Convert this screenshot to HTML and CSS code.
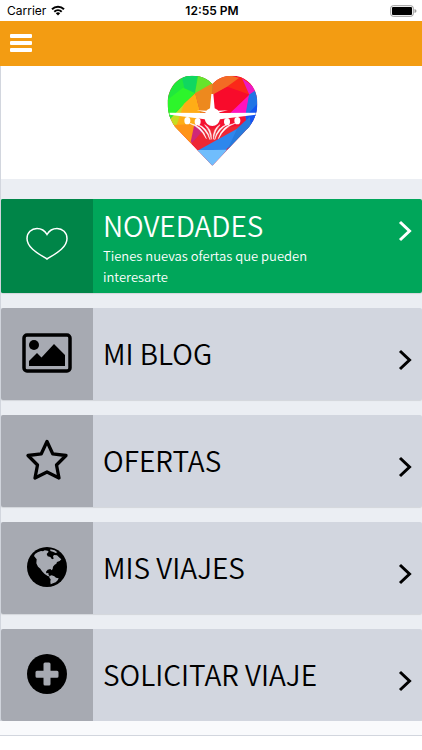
FILE: index.html
```html
<!DOCTYPE html>
<html lang="es">
<head>
<meta charset="utf-8">
<meta name="viewport" content="width=device-width, initial-scale=1">
<title>Inicio</title>
<link rel="stylesheet" href="styles.css">
</head>
<body>
<div class="status">
  <span class="carrier">Carrier
    <svg width="14" height="11" viewBox="0 0 14 11" fill="none" stroke="#000" stroke-width="2"><path d="M1 4.3a8.6 8.6 0 0 1 12 0M3.3 6.8a5.4 5.4 0 0 1 7.4 0"/><path d="M7 10.5 4.8 8.3a3.2 3.2 0 0 1 4.4 0z" fill="#000" stroke="none"/></svg>
  </span>
  <time class="clock">12:55 PM</time>
  <svg class="battery" width="27" height="12" viewBox="0 0 27 12"><rect x=".7" y=".7" width="22.6" height="10.6" rx="2.5" fill="#fff" stroke="#999" stroke-width="1"/><rect x="2" y="2" width="20" height="8" rx="1"/><path d="M24.5 4v4q2-.5 2-2t-2-2z" fill="#999"/></svg>
</div>
<header class="topbar">
  <button class="menu" type="button" aria-label="Menú"><svg width="22" height="20" viewBox="0 0 22 20" fill="#fff"><rect y="0" width="22" height="4" rx="1"/><rect y="7" width="22" height="4" rx="1"/><rect y="14" width="22" height="4" rx="1"/></svg></button>
</header>
<div class="page">
  <div class="brand">
    <svg width="106" height="100" viewBox="0 0 318 300" role="img" aria-label="Logo">
      <clipPath id="heart"><path d="M160 287 48 170C34 152 26 126 26 100C26 54 56 17 99 17C126 17 148 27 160 43C173 27 194 17 220 17C264 17 295 54 295 98C295 127 286 151 270 171Z"/></clipPath>
      <g clip-path="url(#heart)">
        <path fill="#f41230" d="M0 0h318v300H0z"/>
        <path fill="#20e83c" d="M20 10h140v55l-52 5-34 35-54 65z"/>
        <path fill="#10d760" d="m66 10 50 0-8 60-32-15z"/>
        <path fill="#2df52b" d="m72 53 37 17-33 31-54 51V92z"/>
        <path fill="#67e42b" d="m118 15 45 22-3 36-52-4z"/>
        <path fill="#c8dc21" d="m26 155 50-54 14 65-34 19z"/>
        <path fill="#ffad16" d="m75 101 34-31 15 58-16 60-58-14z"/>
        <path fill="#ed891e" d="m108 70 52-30v85l-36 5z"/>
        <path fill="#ff9418" d="m44 165 62-3-7 60-20-10z"/>
        <path fill="#f36b24" d="m160 40 30-30 55 15-41 27-44 23z"/>
        <path fill="#fb2819" d="m245 20 35 20-8 34-68-24z"/>
        <path fill="#f80b2b" d="m204 50 67 24-63 61-48-10V75z"/>
        <path fill="#ff12bd" d="m271 74-63 60 53 5z"/>
        <path fill="#ed18c4" d="m249 25 50 35-28 14z"/>
        <path fill="#2175e5" d="m270 74 30-20v80l-35 42-6-39z"/>
        <path fill="#1455f2" d="m261 138 38-40v50l-35 30z"/>
        <path fill="#cf2878" d="m106 163 29 20-30 43-10-10z"/>
        <path fill="#ee2734" d="m135 178 105-10-5 24-117 53-20-25z"/>
        <path fill="#2e87ed" d="m118 241 115-64 37-14-69 77z"/>
        <path fill="#277bdb" d="m235 175 37-35 5 35-72 65z"/>
        <path fill="#70bdfc" d="m110 240 50 0 45-1-45 51z"/>
      </g>
      <g fill="#fff">
        <path d="M157 72h6l4 43q11 4 15 14l108-1v6l-107 14q-5 20-23 20-18 0-23-20L32 134v-6l107 1q3-10 14-14z"/>
        <path d="m113 121 45 2v8zM207 121l-45 2v8z"/>
        <ellipse cx="85" cy="152" rx="9" ry="11"/><ellipse cx="116" cy="155" rx="9" ry="11"/><ellipse cx="204" cy="155" rx="9" ry="11"/><ellipse cx="235" cy="152" rx="9" ry="11"/>
        <path d="M92 160q38 6 50 46-18-34-50-46zM114 163q32 8 39 46-12-32-39-46zM137 164q22 12 20 44-4-28-20-44zM228 160q-38 6-50 46 18-34 50-46zM206 163q-32 8-39 46 12-32 39-46zM183 164q-22 12-20 44 4-28 20-44z" stroke="#fff" stroke-width="1.5"/>
      </g>
    </svg>
  </div>
  <nav class="cards">
    <a class="card featured" href="#">
      <span class="icon"><svg width="42" height="34" viewBox="0 0 42 34" fill="none" stroke="#fff" stroke-width="1.5"><path d="M21 32C13 27 1 21 1 11.500C1 5.500 5.500 1.500 11 1.500C15.500 1.500 19 4 21 7.500C23 4 26.500 1.500 31 1.500C36.500 1.500 41 5.500 41 11.500C41 21 29 27 21 32Z"/></svg></span>
      <span class="label"><span class="title">NOVEDADES</span><span class="note">Tienes nuevas ofertas que pueden interesarte</span></span>
      <svg class="chevron" width="14" height="22" viewBox="0 0 14 22"><path d="m2 2 9.500 9L2 20"/></svg>
    </a>
    <a class="card" href="#">
      <span class="icon"><svg width="50" height="40" viewBox="0 0 50 40"><rect x="2" y="2" width="46" height="36" rx="3" fill="none" stroke="#000" stroke-width="3.500"/><circle cx="12" cy="12" r="5"/><path d="M7 33v-5l8-8 4.500 4.500L32 11l11 11v11z"/></svg></span>
      <span class="label"><span class="title">MI BLOG</span></span>
      <svg class="chevron" width="14" height="22" viewBox="0 0 14 22"><path d="m2 2 9.500 9L2 20"/></svg>
    </a>
    <a class="card" href="#">
      <span class="icon"><svg width="44" height="42" viewBox="0 0 44 42" fill="none" stroke="#000" stroke-width="3.300" stroke-linejoin="round"><path d="m22 2.500 5.700 12.300 13.300 1.700-9.500 9.500 2.500 13L22 33 10 39l2.500-13L3 16.500l13.300-1.700z"/></svg></span>
      <span class="label"><span class="title">OFERTAS</span></span>
      <svg class="chevron" width="14" height="22" viewBox="0 0 14 22"><path d="m2 2 9.500 9L2 20"/></svg>
    </a>
    <a class="card" href="#">
      <span class="icon"><svg width="40" height="40" viewBox="81 97 120 120"><circle cx="141" cy="157" r="60"/><g fill="#a7aab2"><path d="m102 124 3-6 8-5 10-4 6 1 5-3 9 1 3 3-6 7 3 7 8 2 5 7 5-2-2-7 3-4 9 1 6 6 7 6-5 5-8 3-2 5-5 3-5 6-1 7-3 4-4-4-8 2-5 6 1 5 6-1 1 6 5 5-8-2-9-6-8-8-5-8-7-6-5-10 1-12z"/><path d="m151 104 13 3 8 6-5 2-8-4-8-2zM149 184l6-2 8 3 5 4 8 2-3 6-6 6-8 3-7 3-1-8 1-7-4-5z"/></g></svg></span>
      <span class="label"><span class="title">MIS VIAJES</span></span>
      <svg class="chevron" width="14" height="22" viewBox="0 0 14 22"><path d="m2 2 9.500 9L2 20"/></svg>
    </a>
    <a class="card" href="#">
      <span class="icon"><svg width="40" height="40" viewBox="0 0 40 40"><circle cx="20" cy="20" r="20"/><path fill="#a7aab2" d="M18 8.500h4q1.500 0 1.500 1.500v6.700H30q1.500 0 1.500 1.500v4q0 1.500-1.500 1.500h-6.500V30q0 1.500-1.500 1.500h-4q-1.500 0-1.500-1.500v-6.300H10q-1.500 0-1.500-1.500v-4q0-1.500 1.500-1.500h6.500V10q0-1.500 1.500-1.500z"/></svg></span>
      <span class="label"><span class="title">SOLICITAR VIAJE</span></span>
      <svg class="chevron" width="14" height="22" viewBox="0 0 14 22"><path d="m2 2 9.500 9L2 20"/></svg>
    </a>
  </nav>
  <footer class="footer"></footer>
</div>
</body>
</html>
```
FILE: styles.css
```css
* { box-sizing: border-box; }

body {
  margin: 0;
  min-height: 100vh;
  display: flex;
  flex-direction: column;
  background: #ebeef3;
  color: #000;
  font-family: "Noto Sans CJK SC", sans-serif;
}

svg { display: block; flex: none; }

.status {
  display: grid;
  grid-template-columns: 1fr auto 1fr;
  align-items: center;
  height: 21px;
  padding: 0 5px 0 7px;
  background: #fff;
  font: 12px/21px Inter, sans-serif;
}

.carrier { display: flex; align-items: center; gap: 5px; }
.clock { font-weight: 600; }
.battery { justify-self: end; }

.topbar {
  display: flex;
  align-items: center;
  height: 45px;
  padding: 0 10px;
  background: #f39c12;
}

.menu { padding: 0; border: 0; background: none; }

.page {
  flex: 1;
  display: flex;
  flex-direction: column;
  border-left: 1px solid #d2d6de;
}

.brand {
  display: flex;
  justify-content: center;
  padding: 4px 0 9px;
  background: #fff;
}

.cards {
  display: grid;
  gap: 15px;
  padding: 20px 0 0;
}

.card {
  display: flex;
  min-height: 92px;
  overflow: hidden;
  border-radius: 2px;
  background: #d2d6df;
  box-shadow: 0 1px 1px rgba(0, 0, 0, .1);
  color: inherit;
  text-decoration: none;
}

.icon {
  flex: none;
  display: flex;
  align-items: center;
  justify-content: center;
  width: 92px;
  padding-bottom: 2px;
  background: #a7aab2;
}

.label {
  flex: 1;
  display: flex;
  flex-direction: column;
  justify-content: center;
  padding: 0 80px 2px 10px;
}

.title { font-size: 28px; font-weight: 350; line-height: 40px; white-space: nowrap; }
.note { font-size: 13px; font-weight: 350; line-height: 21px; }

.chevron {
  margin: 41px 10px 0 0;
  fill: none;
  stroke: currentColor;
  stroke-width: 3;
}

.featured {
  min-height: 94px;
  background: #00a65a;
  color: #fff;
}

.featured .icon { padding-bottom: 4px; background: #008548; }
.featured .label { justify-content: flex-start; padding-top: 6px; }
.featured .chevron { margin-top: 21px; }

.footer {
  flex: 1;
  margin-left: -1px;
  border-top: 14px solid #f9fafc;
  background: linear-gradient(#d2d6de 1px, #fff 1px);
}
```
